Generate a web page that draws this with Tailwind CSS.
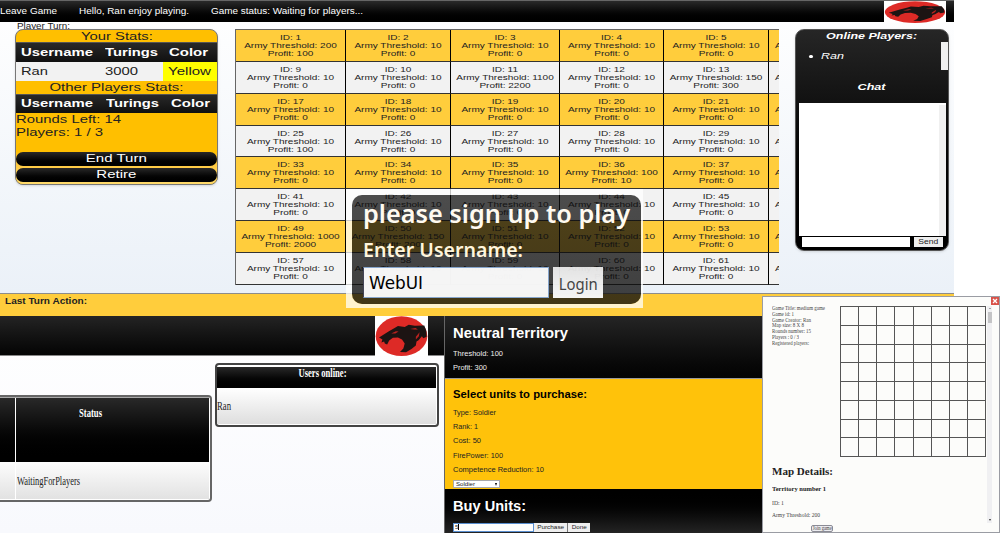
<!DOCTYPE html>
<html lang="en">
<head>
<meta charset="utf-8">
<title>Conquest WebUI</title>
<script src="https://cdn.jsdelivr.net/npm/@tailwindcss/browser@4"></script>
</head>
<body class="bg-white">
<svg class="hidden">
  <symbol id="logo" viewBox="0 0 157 119" preserveAspectRatio="none">
    <rect width="157" height="119" fill="#fff"/>
    <ellipse cx="78.500" cy="60" rx="76.500" ry="59" fill="#dd2a26"/>
    <path d="M12 64L40 46L58 36L68 30L88 33L100 26L118 29L146 28L152 44L153 62L143 66L139 60L129 72L123 76L121 88L108 98L92 108L74 107L84 97L88 82L80 70L68 64L53 65L42 73L36 85L29 82L27 76L19 79L22 70Z" fill="#1c1413"/>
    <path d="M48 52L62 45L70 46L60 52ZM104 39L120 36L127 40L116 40ZM121 62L132 48L130 60L121 70Z" fill="#b9221f"/>
  </symbol>
</svg>
<div class="relative flex h-[533px] w-[1000px] flex-col overflow-hidden font-['Liberation_Sans',sans-serif] text-[#222]">

  <!-- Game screen -->
  <section class="flex h-[294px] w-[954px] shrink-0 flex-col border-b border-[#8c8c8c] bg-linear-to-b from-white to-[#ebf1f8]">
    <header class="flex h-[22px] shrink-0 items-center border-t border-[#666] bg-linear-to-b from-[#2a2a2a] to-black text-[8.500px] whitespace-nowrap text-white">
      <div class="w-[79px]"><span data-w="57" class="inline-block origin-left">Leave Game</span></div>
      <div class="w-[132px]"><span data-w="110" class="inline-block origin-left">Hello, Ran enjoy playing.</span></div>
      <div class="w-[673px]"><span data-w="152" class="inline-block origin-left">Game status: Waiting for players...</span></div>
      <svg class="h-[22px] w-[62px]"><use href="#logo"/></svg>
    </header>
    <div class="flex h-[271px] overflow-hidden">
      <div class="w-[235px] shrink-0 pl-[15px]">
        <div class="h-[7px] pl-[2px] text-[8.500px] leading-[8px]"><span data-w="53" class="inline-block origin-left">Player Turn:</span></div>
        <div class="relative h-[156px] w-[203px] overflow-hidden rounded-lg border border-[#777] bg-[#ffbf00] text-[11.500px] whitespace-nowrap shadow-sm">
          <div class="h-[12px] text-center leading-[13px]"><span data-w="72" class="inline-block">Your Stats:</span></div>
          <div class="flex h-[20px] items-center border-t border-[#555] bg-linear-to-b from-[#292929] to-[#101010] pl-[5px] font-bold text-white">
            <div class="w-[84px]"><span data-w="72" class="inline-block origin-left">Username</span></div>
            <div class="w-[64px]"><span data-w="53" class="inline-block origin-left">Turings</span></div>
            <div><span data-w="39" class="inline-block origin-left">Color</span></div>
          </div>
          <div class="flex h-[19px] items-center bg-[#f2f2f2] pl-[5px]">
            <div class="w-[84px]"><span data-w="27" class="inline-block origin-left">Ran</span></div>
            <div class="w-[59px]"><span data-w="33" class="inline-block origin-left">3000</span></div>
            <div class="flex h-full w-[54px] items-center bg-[#ff0] pl-[5px]"><span data-w="43" class="inline-block origin-left">Yellow</span></div>
          </div>
          <div class="h-[13px] text-center leading-[13px]"><span data-w="134" class="inline-block">Other Players Stats:</span></div>
          <div class="flex h-[19px] items-center border-t border-[#555] bg-linear-to-b from-[#292929] to-[#101010] pl-[5px] font-bold text-white">
            <div class="w-[85px]"><span data-w="72" class="inline-block origin-left">Username</span></div>
            <div class="w-[65px]"><span data-w="53" class="inline-block origin-left">Turings</span></div>
            <div><span data-w="39" class="inline-block origin-left">Color</span></div>
          </div>
          <div class="h-[39px] leading-[12.500px]">
            <div><span data-w="105" class="inline-block origin-left">Rounds Left: 14</span></div>
            <div><span data-w="87" class="inline-block origin-left">Players: 1 / 3</span></div>
          </div>
          <div class="flex h-[34px] flex-col gap-[2px] bg-linear-to-b from-[#ffbf00] to-[#ffdc70] text-center leading-[13px] text-white">
            <div class="h-[14px] rounded-full bg-linear-to-b from-[#292929] to-black"><span data-w="61" class="inline-block">End Turn</span></div>
            <div class="h-[14px] rounded-full bg-linear-to-b from-[#292929] to-black"><span data-w="40" class="inline-block">Retire</span></div>
          </div>
        </div>
      </div>
      <div class="w-[544px] shrink-0 overflow-hidden pt-[7px]">
        <div id="board" class="grid w-[635px] grid-cols-[110px_105px_109px_104px_105px_100px] grid-rows-[repeat(8,31.850px)] border-t border-l border-[#666]"></div>
      </div>
      <aside class="mt-[7px] ml-[16px] flex h-[222px] w-[154px] flex-col overflow-hidden rounded-[9px] border border-[#555] bg-linear-to-b from-[#262626] to-black text-white shadow-sm">
        <div class="h-[12px] text-center text-[9.500px] leading-[12px] font-bold italic"><span data-w="91" class="inline-block">Online Players:</span></div>
        <div class="flex h-[60px] justify-between">
          <div class="flex gap-[8px] pt-[8px] pl-[13px] text-[9.500px] leading-[12px] italic"><span class="mt-[4.500px] size-[3.500px] rounded-full bg-white"></span><span data-w="23" class="inline-block origin-left">Ran</span></div>
          <div class="h-[28px] w-[7px] bg-[#f0f0f0]"></div>
        </div>
        <div class="-mt-[22px] h-[23px] text-center text-[9.500px] leading-[13px] font-bold italic"><span data-w="28" class="inline-block">Chat</span></div>
        <div class="ml-[3px] flex h-[133px] w-[147px] shrink-0 justify-end bg-white"><div class="mt-[2px] w-[7px] bg-[#f0f0f0]"></div></div>
        <div class="mt-px flex gap-[4px] pl-[6px]">
          <div class="h-[10px] w-[108px] bg-white"></div>
          <div class="h-[10px] w-[29px] bg-[#eee] text-center text-[7px] leading-[10px] text-[#222]"><span data-w="20" class="inline-block">Send</span></div>
        </div>
      </aside>
    </div>
  </section>

  <div class="h-[22px] w-[954px] shrink-0 bg-[#ffcd3c] pl-[5px] text-[8.500px] leading-[14px] font-bold"><span data-w="82" class="inline-block origin-left">Last Turn Action:</span></div>

  <div class="flex h-[217px]">
    <!-- Lobby -->
    <section class="flex w-[444px] flex-col bg-linear-to-b from-white to-[#f8f9fd] font-['Liberation_Serif',serif]">
      <header class="flex h-[40px] shrink-0 justify-end border-b border-[#888] bg-linear-to-b from-[#242424] to-[#050505] pr-[16px]"><svg class="h-[40px] w-[53px] shrink-0"><use href="#logo"/></svg></header>
      <div class="flex gap-[3px]">
        <div class="mt-[39px] flex h-[107px] w-[212px] flex-col rounded-r-[4px] border-2 border-l-0 border-[#666] bg-white pr-px text-[12px] leading-[14px]">
          <div class="h-px bg-[#aaa]"></div>
          <div class="flex h-[64px] gap-px text-white">
            <div class="w-[15px] bg-linear-to-b from-[#292929] to-black"></div>
            <div class="flex-1 bg-linear-to-b from-[#292929] to-black pt-[8px] pl-[63px] font-bold"><span data-w="23" class="inline-block origin-left">Status</span></div>
          </div>
          <div class="flex flex-1 gap-px pb-px">
            <div class="w-[15px] bg-linear-to-b from-[#fdfdfd] to-[#e2e2e2]"></div>
            <div class="flex-1 bg-linear-to-b from-[#fdfdfd] to-[#e2e2e2] pt-[12px] pl-px"><span data-w="63" class="inline-block origin-left">WaitingForPlayers</span></div>
          </div>
        </div>
        <div class="mt-[7px] flex h-[64px] w-[224px] flex-col rounded-[4px] border-2 border-[#444] bg-white pr-px pb-px pt-[2px] text-[12px]">
          <div class="h-[21px] bg-linear-to-b from-[#292929] to-black pr-[9px] text-center leading-[13px] font-bold text-white"><span data-w="48" class="inline-block">Users online:</span></div>
          <div class="flex-1 bg-linear-to-b from-white to-[#dedede] pt-[10px] leading-[16px]"><span data-w="14" class="inline-block origin-left">Ran</span></div>
        </div>
      </div>
    </section>

    <!-- Territory purchase -->
    <section class="flex w-[318px] flex-col border-l border-[#666] text-[7.500px] whitespace-nowrap">
      <div class="h-[63px] border-b border-[#999] bg-linear-to-b from-[#252525] to-[#030303] pt-[9px] pl-[8px] text-[#eee]">
        <div class="text-[14px] leading-[16px] font-bold text-white"><span data-w="115" class="inline-block origin-left">Neutral Territory</span></div>
        <div class="mt-[6px] leading-[14px]"><span data-w="50" class="inline-block origin-left">Threshold: 100</span></div>
        <div class="leading-[14px]"><span data-w="34" class="inline-block origin-left">Profit: 300</span></div>
      </div>
      <div class="h-[110px] bg-[#ffc20a] pt-[8px] pl-[8px]">
        <div class="text-[10.500px] leading-[14px] font-bold text-black"><span data-w="134" class="inline-block origin-left">Select units to purchase:</span></div>
        <div class="mt-[5px] leading-[14.200px]">
          <div><span data-w="43" class="inline-block origin-left">Type: Soldier</span></div>
          <div><span data-w="25" class="inline-block origin-left">Rank: 1</span></div>
          <div><span data-w="28" class="inline-block origin-left">Cost: 50</span></div>
          <div><span data-w="50" class="inline-block origin-left">FirePower: 100</span></div>
          <div><span data-w="91" class="inline-block origin-left">Competence Reduction: 10</span></div>
        </div>
        <div class="mt-[3px] flex h-[8px] w-[47px] items-center justify-between border border-[#aaa] bg-white px-[1.500px] text-[6px] leading-[6px]"><span data-w="19" class="inline-block origin-left">Soldier</span><span class="mr-px size-0 border-x-[1.500px] border-t-[3px] border-x-transparent border-t-black"></span></div>
      </div>
      <div class="flex-1 bg-linear-to-b from-black to-[#242424] pt-[8px] pl-[8px]">
        <div class="text-[14px] leading-[18px] font-bold text-white"><span data-w="73" class="inline-block origin-left">Buy Units:</span></div>
        <div class="mt-[8px] flex h-[9px] text-[6px] leading-[8px]">
          <div class="w-[81px] border border-[#5a8fd0] bg-white pl-px leading-[7px]"><span class="border-r border-black">5</span></div>
          <div class="w-[34px] border-r border-[#777] bg-[#eee] text-center"><span data-w="27" class="inline-block">Purchase</span></div>
          <div class="w-[22px] bg-[#eee] text-center"><span data-w="15" class="inline-block">Done</span></div>
        </div>
      </div>
    </section>
  </div>

  <!-- Game details window -->
  <section class="absolute top-[296px] left-[762px] flex h-[237px] w-[238px] flex-col border border-[#9a9ca3] bg-[#fcfcfa] font-['Liberation_Serif',serif] text-[#444] whitespace-nowrap">
    <div class="flex h-[9px] justify-end"><svg class="size-[8px] bg-[#d9534a]" viewBox="0 0 8 8"><path d="M2 2L6 6M6 2L2 6" stroke="#fff" stroke-width="1.300"/></svg></div>
    <div class="flex h-[217px]">
      <div class="flex w-[223px] flex-col pl-[9px]">
        <div class="flex justify-between">
          <div class="text-[6px] leading-[5.800px]">
            <div><span data-w="53" class="inline-block origin-left">Game Title: medium game</span></div>
            <div><span data-w="22" class="inline-block origin-left">Game id: 1</span></div>
            <div><span data-w="39" class="inline-block origin-left">Game Creator: Ran</span></div>
            <div><span data-w="32" class="inline-block origin-left">Map size: 8 X 8</span></div>
            <div><span data-w="39" class="inline-block origin-left">Rounds number: 15</span></div>
            <div><span data-w="27" class="inline-block origin-left">Players : 0 / 3</span></div>
            <div><span data-w="37" class="inline-block origin-left">Registered players:</span></div>
          </div>
          <div id="minimap" class="grid h-[151px] w-[146px] grid-cols-8 grid-rows-8 border-t border-l border-[#555]"></div>
        </div>
        <div class="mt-[7px] text-[11px] leading-[14px] font-bold text-[#222]"><span data-w="61" class="inline-block origin-left">Map Details:</span></div>
        <div class="mt-[7px] text-[6.500px] leading-[8px] font-bold text-[#222]"><span data-w="54" class="inline-block origin-left">Territory number 1</span></div>
        <div class="mt-[6px] text-[6px] leading-[8px]"><span data-w="12" class="inline-block origin-left">ID: 1</span></div>
        <div class="mt-[4px] text-[6px] leading-[8px]"><span data-w="48" class="inline-block origin-left">Army Threshold: 200</span></div>
      </div>
      <div class="ml-px flex w-[5px] flex-col items-center bg-[#f0f0f2] py-[2px]">
        <span class="size-0 border-x-[1px] border-b-[1px] border-x-transparent border-b-[#555]"></span>
        <span class="mt-[3px] h-[11px] w-[4px] bg-[#c4c4c6]"></span>
        <span class="mt-auto size-0 border-x-[1.500px] border-t-[2px] border-x-transparent border-t-[#333]"></span>
      </div>
    </div>
    <div class="mt-[2px] ml-[48px] flex h-[7px] w-[22px] justify-center rounded-[2px] border border-[#8b8b95] bg-[#ececf0] text-[6px] leading-[5px]"><span data-w="19" class="inline-block">Join game</span></div>
  </section>

  <!-- Sign up overlay -->
  <section class="absolute top-[189px] left-[346px] h-[119px] w-[297px] overflow-hidden pt-[6px] pl-[6px] font-['Noto_Sans',sans-serif] whitespace-nowrap">
    <div class="h-[109px] w-[289px] rounded-[10px] bg-linear-to-b from-[#0c0c0c]/72 to-[#0c0c0c]/78 pl-[11px] shadow-[0_0_0_14px_rgba(255,255,255,0.75)]">
      <div class="h-[39px] text-[26px] leading-[36px] font-semibold text-[#fffaf0]"><span data-w="267" class="inline-block origin-left">please sign up to play</span></div>
      <div class="h-[33px] text-[20px] leading-[32px] font-semibold text-[#fff5dc]"><span data-w="160" class="inline-block origin-left">Enter Username:</span></div>
      <div class="flex gap-[4px]">
        <div class="h-[31px] w-[186px] border border-[#86a5cc] border-l-[#445] bg-white/95 pl-[5px] font-['DejaVu_Sans',sans-serif] text-[17px] leading-[31px] text-black"><span data-w="54" class="inline-block origin-left">WebUI</span></div>
        <div class="h-[31px] w-[50px] bg-linear-to-b from-white/85 to-white/95 text-center text-[17px] leading-[33px] text-[#444]"><span data-w="39" class="inline-block">Login</span></div>
      </div>
    </div>
  </section>
</div>

<script>
  // Territories that differ from the default threshold (10) and profit (0)
  const special = {1:[200,100],11:[1100,2200],13:[150,300],25:[10,100],36:[100,10],49:[1000,2000],50:[150,200]};
  const board = document.getElementById('board');
  for (let r = 0; r < 8; r++) for (let c = 0; c < 6; c++) {
    const id = r * 8 + c + 1, [t, p] = special[id] || [10, 0];
    const tone = r % 2 ? 'bg-[#f2f2f2]' : 'bg-[#ffcd3c]';
    board.insertAdjacentHTML('beforeend', `<div class="${tone} border-b border-r border-b-[#333] border-r-black pt-[4px] text-center text-[8px] leading-[8px] whitespace-nowrap"><div class="flex scale-x-[1.250] flex-col items-center"><div>ID: ${id}</div><div>Army Threshold: ${t}</div><div>Profit: ${p}</div></div></div>`);
  }
  document.getElementById('minimap').innerHTML = '<div class="border-r border-b border-[#555]"></div>'.repeat(64);
  // Stretch labels to their set widths, again whenever their natural size changes
  const fit = e => {
    const w = parseFloat(getComputedStyle(e).width);
    if (w) e.style.transform = `scaleX(${e.dataset.w / w})`;
  };
  const watcher = new ResizeObserver(list => list.forEach(x => fit(x.target)));
  document.querySelectorAll('[data-w]').forEach(e => { fit(e); watcher.observe(e); });
  window.addEventListener('load', () => document.querySelectorAll('[data-w]').forEach(fit));
</script>
</body>
</html>
